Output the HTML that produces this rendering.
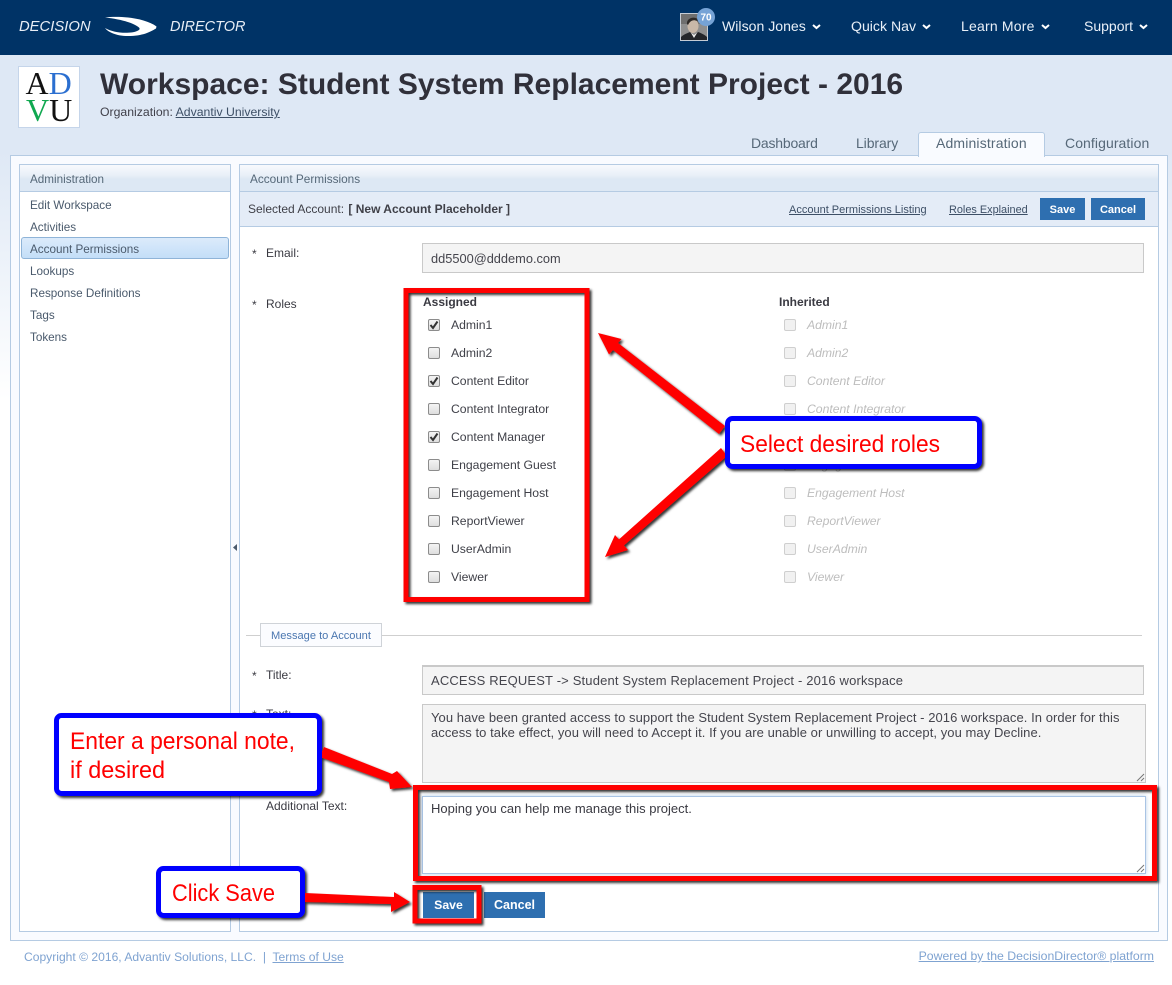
<!DOCTYPE html>
<html><head><meta charset="utf-8"><title>Account Permissions</title>
<style>
*{box-sizing:border-box}
html,body{margin:0;padding:0}
body{width:1172px;height:985px;position:relative;overflow:hidden;font-family:"Liberation Sans",sans-serif;font-size:12px;color:#3a3a42;background:linear-gradient(#dee8f5 0,#dee8f5 150px,#fff 400px,#fff 100%)}
.a{position:absolute}
.t{position:absolute;white-space:nowrap;line-height:14px}
.hdr{left:0;top:0;width:1172px;height:55px;background:#003366}
.nav{color:#e9f0f8;font-size:14px;line-height:16px;top:18px}
.tab{font-size:14px;line-height:16px;top:135px;color:#566878}
.side{color:#4a5a6c;font-size:11.700px;left:30px}
.hd{background:linear-gradient(#f8fafd 0,#e9f0f8 10px,#dde8f4 14px,#dde8f4 100%);border-bottom:1px solid #b5cbe3}
.btn{background:#2e6fb0;color:#fff;font-weight:bold;text-align:center}
.lnk{color:#3d4f66;text-decoration:underline;font-size:11px}
.field{background:#f4f4f4;border:1px solid #c9c9c9;color:#45454d}
.cb{position:absolute;width:12px;height:12px;border:1px solid #8c8c8c;border-radius:2px;background:linear-gradient(#f4f4f4,#dedede)}
.cb.d{border-color:#cfcfcf;background:#f1f1f1}
.l{left:451px;color:#3f4048;font-size:12.200px}
.i{left:807px;color:#bdbdbd;font-style:italic;font-size:12.200px}
</style></head><body>
<div class="a hdr"></div>
<div class="t" style="left:19px;top:19px;color:#e8eef6;font-size:14.800px;line-height:16px;font-style:italic">DECISION</div>
<svg class="a" style="left:100px;top:12px" width="62" height="30" viewBox="100 12 62 30"><path fill="#fff" d="M105 17.500C120 15.500 145 18 156.500 26.500L156 28.500C150 32 143 36 128 36C116 36 108 32 105 28C112 32 122 33.500 131 32.500C138 31.500 141 29.500 139 27.500C134 23 120 19 105 17.500Z"/></svg>
<div class="t" style="left:170px;top:19px;color:#e8eef6;font-size:14.500px;line-height:16px;font-style:italic">DIRECTOR</div>
<svg class="a" style="left:680px;top:8px" width="36" height="34" viewBox="680 8 36 34">
<rect x="680.500" y="13.500" width="27" height="27" fill="#8f8f8f" stroke="#c4cbd4"/>
<rect x="681" y="14" width="26" height="10" fill="#6f6f6f"/>
<ellipse cx="693" cy="26" rx="5.500" ry="7" fill="#c9b8a8"/>
<path d="M687 24C686 17 698 15 699 22L697 21C693 19 690 21 688 25Z" fill="#2e2a28"/>
<path d="M681 40L681 37C684 34 688 33 690 32L694 37L698 32C701 33 705 35 707 37L707 40Z" fill="#24262a"/>
<path d="M691 33L694 38L697 33L694 35Z" fill="#eee"/>
<circle cx="706" cy="17" r="9" fill="#76a3d6"/>
<text x="706" y="20.500" font-family="Liberation Sans" font-size="10" font-weight="bold" fill="#fff" text-anchor="middle">70</text>
</svg>
<div class="t nav" style="left:722px;font-size:14.100px">Wilson Jones</div>
<div class="t nav" style="left:851px;font-size:14.100px">Quick Nav</div>
<div class="t nav" style="left:961px;letter-spacing:.2px">Learn More</div>
<div class="t nav" style="left:1084px">Support</div>
<svg class="a" style="left:0;top:20px" width="1172" height="14" viewBox="0 20 1172 14" fill="none" stroke="#fff" stroke-width="2"><path d="M813 25L816.500 28L820 25M923 25L926.500 28L930 25M1042 25L1045.500 28L1049 25M1140 25L1143.500 28L1147 25"/></svg>

<div class="a" style="left:18px;top:66px;width:62px;height:62px;background:#fff;border:1px solid #c5d5ea"></div>
<div class="t" style="left:25.500px;top:67px;font:32px/33px 'Liberation Serif',serif;color:#111">A<span style="color:#2b6fd0">D</span></div>
<div class="t" style="left:26px;top:94px;font:32px/33px 'Liberation Serif',serif;color:#111"><span style="color:#10a850">V</span>U</div>
<div class="t" style="left:100px;top:68px;font-size:30px;line-height:34px;font-weight:bold;color:#30303a">Workspace: Student System Replacement Project - 2016</div>
<div class="t" style="left:100px;top:105px;color:#40404a;font-size:12.250px">Organization: <a style="color:#3d4f66;text-decoration:underline">Advantiv University</a></div>

<div class="a" style="left:10px;top:155px;width:1158px;height:786px;background:#f9fbff;border:1px solid #b5cbe3"></div>
<div class="t tab" style="left:751px;letter-spacing:-.2px">Dashboard</div>
<div class="t tab" style="left:856px;letter-spacing:-.1px">Library</div>
<div class="a" style="left:918px;top:132px;width:127px;height:25px;background:#f9fbff;border:1px solid #b5cbe3;border-bottom:0;border-radius:3px 3px 0 0"></div>
<div class="t tab" style="left:936px;letter-spacing:.15px">Administration</div>
<div class="t tab" style="left:1065px;letter-spacing:.08px">Configuration</div>

<div class="a" style="left:19px;top:164px;width:212px;height:768px;background:#fff;border:1px solid #b5cbe3"></div>
<div class="a hd" style="left:20px;top:165px;width:210px;height:27px"></div>
<div class="t side" style="top:173px;color:#566878">Administration</div>
<div class="t side" style="top:199px">Edit Workspace</div>
<div class="t side" style="top:221px">Activities</div>
<div class="a" style="left:21px;top:237px;width:208px;height:22px;border:1px solid #8fb4d8;border-radius:3px;background:linear-gradient(#dcebfb,#c3def8)"></div>
<div class="t side" style="top:243px">Account Permissions</div>
<div class="t side" style="top:265px">Lookups</div>
<div class="t side" style="top:287px">Response Definitions</div>
<div class="t side" style="top:309px">Tags</div>
<div class="t side" style="top:331px">Tokens</div>
<svg class="a" style="left:232px;top:544px" width="6" height="8"><path d="M5 0V7L1 3.500Z" fill="#4a5a6c"/></svg>

<div class="a" style="left:239px;top:164px;width:920px;height:768px;background:#fff;border:1px solid #b5cbe3"></div>
<div class="a hd" style="left:240px;top:165px;width:918px;height:27px"></div>
<div class="t" style="left:250px;top:172px;color:#566878;font-size:11.800px">Account Permissions</div>
<div class="a" style="left:240px;top:192px;width:918px;height:35px;background:#e4ecf7;border-bottom:1px solid #b5cbe3"></div>
<div class="t" style="left:248px;top:202px;color:#3f4048">Selected Account: <b style="margin-left:1px">[ New Account Placeholder ]</b></div>
<div class="t lnk" style="left:789px;top:203px">Account Permissions Listing</div>
<div class="t lnk" style="left:949px;top:203px;font-size:10.900px">Roles Explained</div>
<div class="a btn" style="left:1040px;top:198px;width:45px;height:22px;font-size:11px;line-height:24px">Save</div>
<div class="a btn" style="left:1091px;top:198px;width:54px;height:22px;font-size:11px;line-height:24px">Cancel</div>

<div class="t" style="left:252px;top:247px">*</div><div class="t" style="left:266px;top:246px">Email:</div>
<div class="a field" style="left:422px;top:243px;width:722px;height:30px;font-size:12.800px;line-height:29px;padding-left:8px">dd5500@dddemo.com</div>
<div class="t" style="left:252px;top:298px">*</div><div class="t" style="left:266px;top:297px">Roles</div>
<div class="t" style="left:423px;top:295px;font-weight:bold">Assigned</div>
<div class="t" style="left:779px;top:295px;font-weight:bold">Inherited</div>

<div class="cb" style="left:428px;top:319px"></div><div class="t l" style="top:318px">Admin1</div>
<div class="cb" style="left:428px;top:347px"></div><div class="t l" style="top:346px">Admin2</div>
<div class="cb" style="left:428px;top:375px"></div><div class="t l" style="top:374px">Content Editor</div>
<div class="cb" style="left:428px;top:403px"></div><div class="t l" style="top:402px">Content Integrator</div>
<div class="cb" style="left:428px;top:431px"></div><div class="t l" style="top:430px">Content Manager</div>
<div class="cb" style="left:428px;top:459px"></div><div class="t l" style="top:458px">Engagement Guest</div>
<div class="cb" style="left:428px;top:487px"></div><div class="t l" style="top:486px">Engagement Host</div>
<div class="cb" style="left:428px;top:515px"></div><div class="t l" style="top:514px">ReportViewer</div>
<div class="cb" style="left:428px;top:543px"></div><div class="t l" style="top:542px">UserAdmin</div>
<div class="cb" style="left:428px;top:571px"></div><div class="t l" style="top:570px">Viewer</div>
<svg class="a" style="left:428px;top:319px" width="12" height="124" fill="none" stroke="#333" stroke-width="2"><path d="M2.500 6L5 9L9.500 2.500M2.500 62L5 65L9.500 58.500M2.500 118L5 121L9.500 114.500"/></svg>

<div class="cb d" style="left:784px;top:319px"></div><div class="t i" style="top:318px">Admin1</div>
<div class="cb d" style="left:784px;top:347px"></div><div class="t i" style="top:346px">Admin2</div>
<div class="cb d" style="left:784px;top:375px"></div><div class="t i" style="top:374px">Content Editor</div>
<div class="cb d" style="left:784px;top:403px"></div><div class="t i" style="top:402px">Content Integrator</div>
<div class="cb d" style="left:784px;top:431px"></div><div class="t i" style="top:430px">Content Manager</div>
<div class="cb d" style="left:784px;top:459px"></div><div class="t i" style="top:458px">Engagement Guest</div>
<div class="cb d" style="left:784px;top:487px"></div><div class="t i" style="top:486px">Engagement Host</div>
<div class="cb d" style="left:784px;top:515px"></div><div class="t i" style="top:514px">ReportViewer</div>
<div class="cb d" style="left:784px;top:543px"></div><div class="t i" style="top:542px">UserAdmin</div>
<div class="cb d" style="left:784px;top:571px"></div><div class="t i" style="top:570px">Viewer</div>

<div class="a" style="left:246px;top:635px;width:896px;height:1px;background:#cfcfcf"></div>
<div class="a" style="left:260px;top:623px;width:122px;height:24px;background:#fbfcff;border:1px solid #cfd3d8"></div>
<div class="t" style="left:271px;top:629px;font-size:11.100px;color:#4a76b0">Message to Account</div>

<div class="t" style="left:252px;top:669px">*</div><div class="t" style="left:266px;top:668px">Title:</div>
<div class="a field" style="left:422px;top:665px;width:722px;height:30px;font-size:13px;letter-spacing:.16px;line-height:28px;padding-left:8px;border-top-width:2px">ACCESS REQUEST -&gt; Student System Replacement Project - 2016 workspace</div>
<div class="t" style="left:252px;top:708px">*</div><div class="t" style="left:266px;top:707px">Text:</div>
<div class="a field" style="left:422px;top:704px;width:724px;height:79px;font-size:13px;letter-spacing:.06px;line-height:15px;padding:5px 8px;white-space:nowrap">You have been granted access to support the Student System Replacement Project - 2016 workspace. In order for this<br>access to take effect, you will need to Accept it. If you are unable or unwilling to accept, you may Decline.</div>
<div class="t" style="left:266px;top:799px">Additional Text:</div>
<div class="a" style="left:422px;top:796px;width:724px;height:78px;background:#fff;border:1px solid #a9c4e4;box-shadow:0 0 4px #b9cfe8;font-size:13px;line-height:15px;padding:4px 8px;color:#3a3a42">Hoping you can help me manage this project.</div>
<svg class="a" style="left:1136px;top:773px" width="10" height="100" fill="none" stroke="#777"><path d="M1 8L8 1M5 8L8 5M1 99L8 92M5 99L8 96"/></svg>
<div class="a btn" style="left:423px;top:892px;width:51px;height:26px;line-height:26px;font-size:12.300px">Save</div>
<div class="a btn" style="left:484px;top:892px;width:61px;height:26px;line-height:26px;font-size:12.500px">Cancel</div>

<div class="t" style="left:24px;top:950px;color:#7fa3d1;font-size:12.100px">Copyright © 2016, Advantiv Solutions, LLC. &nbsp;|&nbsp; <span style="text-decoration:underline">Terms of Use</span></div>
<div class="t" style="right:18px;top:949px;color:#7fa3d1;text-decoration:underline;font-size:12.270px">Powered by the DecisionDirector® platform</div>

<svg class="a" style="left:0;top:0" width="1172" height="985" viewBox="0 0 1172 985">
<defs><filter id="s" x="-10%" y="-10%" width="125%" height="125%"><feDropShadow dx="2" dy="2" stdDeviation="1.200" flood-color="#000" flood-opacity=".8"/></filter></defs>
<g filter="url(#s)">
<rect x="406" y="290.500" width="181" height="309" fill="none" stroke="#f00" stroke-width="5"/>
<rect x="415.500" y="787.500" width="739" height="91" fill="none" stroke="#f00" stroke-width="5"/>
<rect x="415" y="887.500" width="64" height="33.500" fill="none" stroke="#f00" stroke-width="5"/>
<polygon fill="#f00" points="725,426 618,343 621.500,339 598,333 609,354.500 613,350 719,434"/>
<polygon fill="#f00" points="727,456 624,545.400 628,550 605,557 615,535 619,539.400 721,448"/>
<polygon fill="#f00" points="324,747 392,774 397,771 412,787 390,789 389,782 320,757"/>
<polygon fill="#f00" points="305,893 394,897 394,892 410,902 391,912 391,904 305,902"/>
<rect x="727.500" y="418.500" width="252" height="48" rx="5" fill="#fff" stroke="#00f" stroke-width="5"/>
<rect x="56.500" y="715.500" width="263" height="78" rx="5" fill="#fff" stroke="#00f" stroke-width="5"/>
<rect x="158.500" y="868.500" width="144" height="47" rx="5" fill="#fff" stroke="#00f" stroke-width="5"/>
</g>
<g font-family="Liberation Sans" font-size="24" fill="#f00">
<text x="740" y="452" textLength="200" lengthAdjust="spacingAndGlyphs">Select desired roles</text>
<text x="70" y="749" textLength="225" lengthAdjust="spacingAndGlyphs">Enter a personal note,</text>
<text x="70" y="778" textLength="95" lengthAdjust="spacingAndGlyphs">if desired</text>
<text x="172" y="901" textLength="103" lengthAdjust="spacingAndGlyphs">Click Save</text>
</g>
</svg>
</body></html>
